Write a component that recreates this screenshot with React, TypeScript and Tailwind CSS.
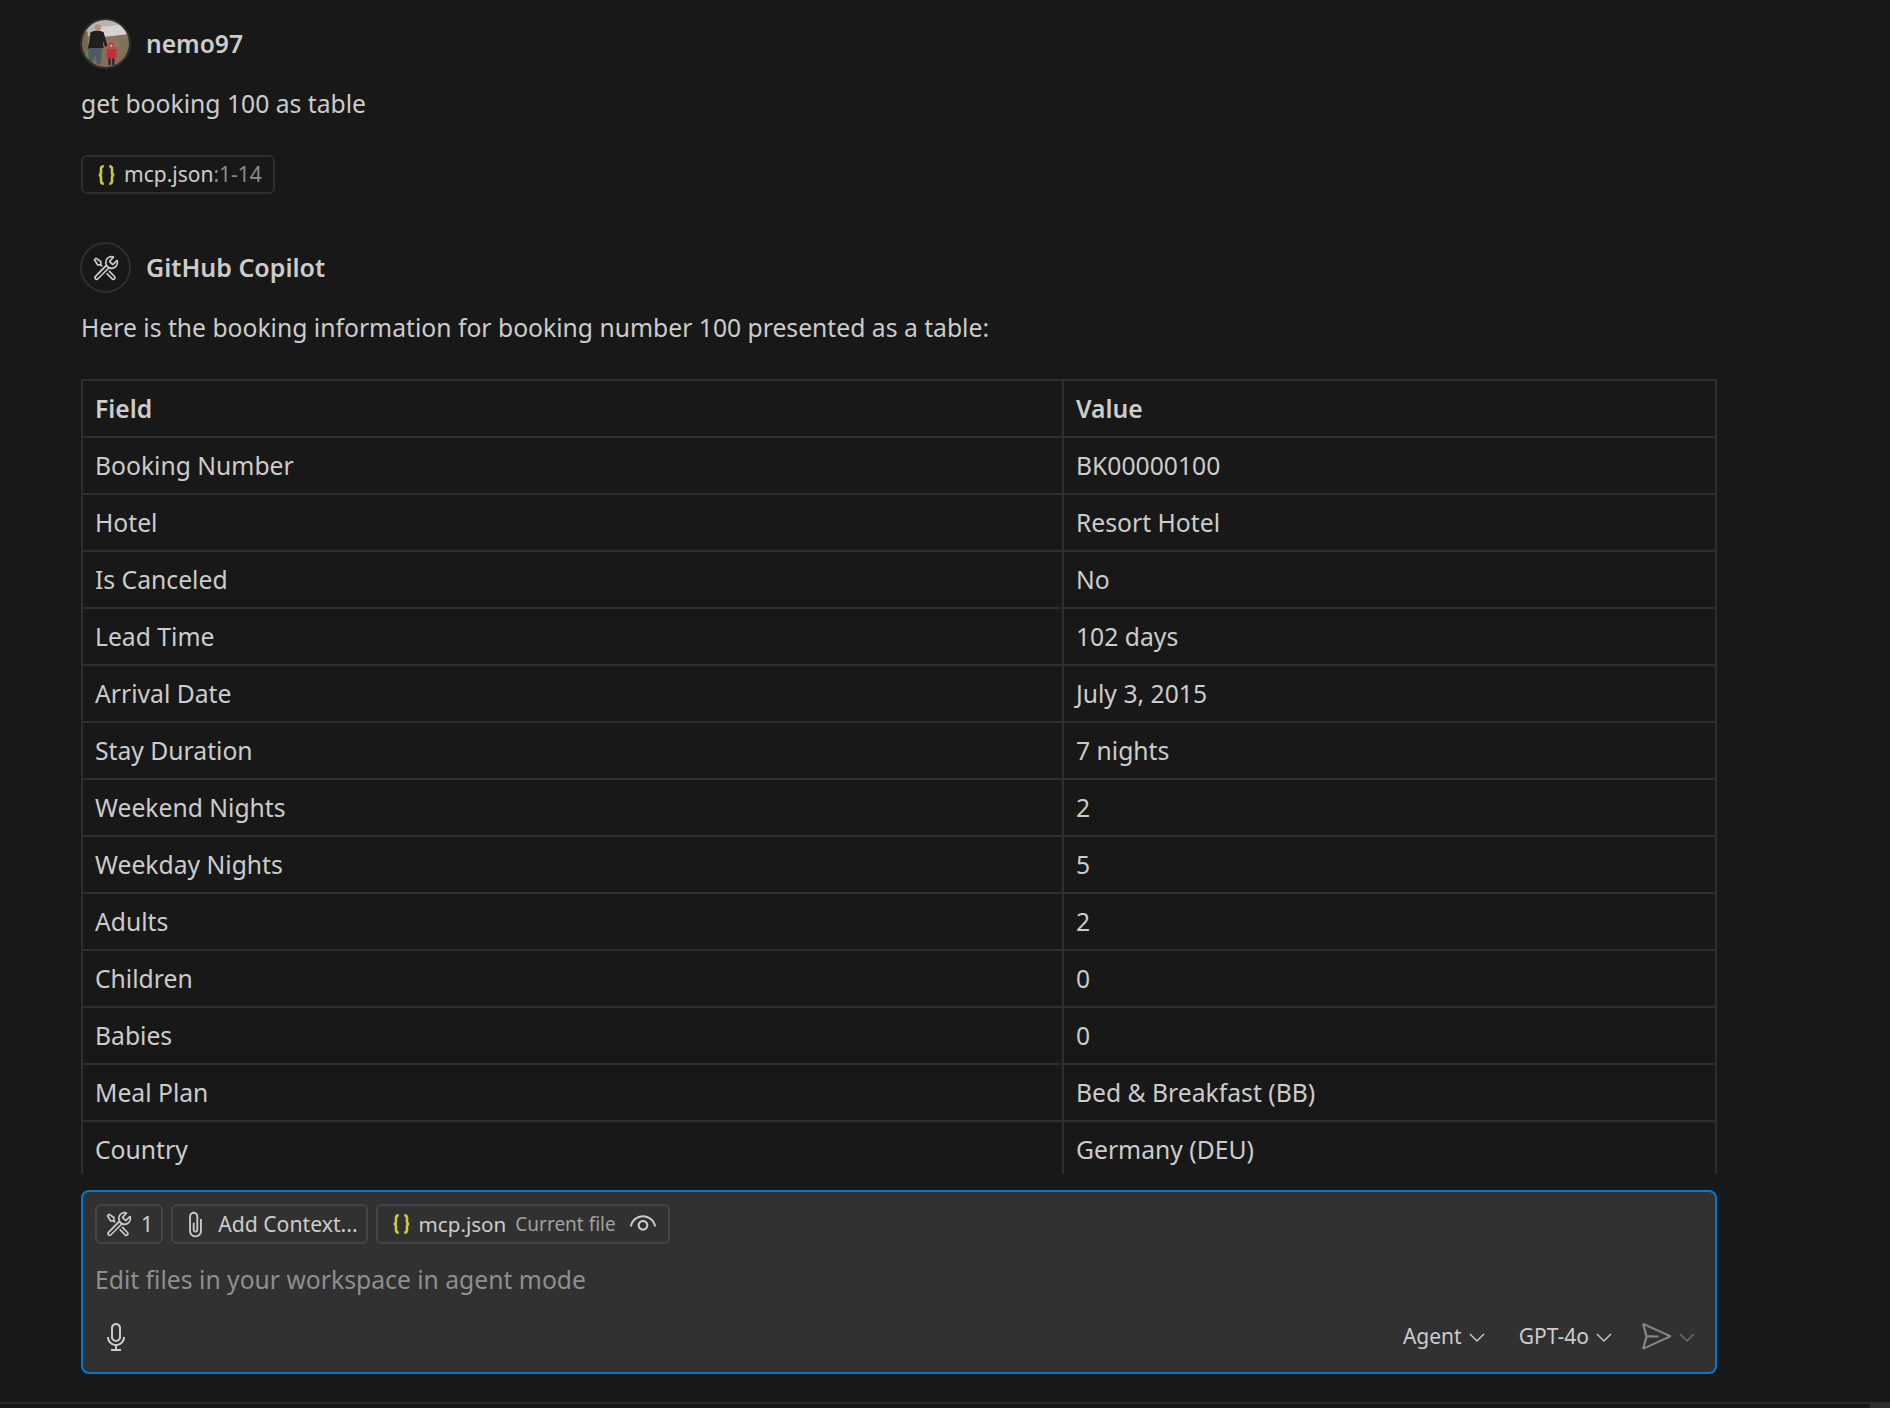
import { VscAttach, VscChevronDown, VscEye, VscMic, VscSend, VscTools } from "react-icons/vsc";

const rows = [
    ["Booking Number", "BK00000100"],
    ["Hotel", "Resort Hotel"],
    ["Is Canceled", "No"],
    ["Lead Time", "102 days"],
    ["Arrival Date", "July 3, 2015"],
    ["Stay Duration", "7 nights"],
    ["Weekend Nights", "2"],
    ["Weekday Nights", "5"],
    ["Adults", "2"],
    ["Children", "0"],
    ["Babies", "0"],
    ["Meal Plan", "Bed & Breakfast (BB)"],
    ["Country", "Germany (DEU)"],
];

function JsonIcon({ className }: { className: string }) {
    return (
        <svg viewBox="0 0 20 24" className={className} fill="none" stroke="#cbcb41" strokeWidth="2.8">
            <path d="M7 2.5C4.5 2.5 4 3.5 4 5.5v4C4 11 3.5 12 1.5 12C3.5 12 4 13 4 14.5v4c0 2 .5 3 3 3" />
            <path d="M13 2.5c2.5 0 3 1 3 3v4c0 1.5.5 2.5 2.5 2.5c-2 0-2.5 1-2.5 2.5v4c0 2-.5 3-3 3" />
        </svg>
    );
}

function Avatar() {
    return (
        <div className="h-[51px] w-[51px] shrink-0 overflow-hidden rounded-full border-2 border-[#2e2e2e]">
            <svg viewBox="0 0 50 50" className="h-full w-full blur-[0.4px]">
                <rect width="50" height="50" fill="#8f7a68" />
                <rect width="50" height="17" fill="#b9b5ae" />
                <path d="M14 8 L44 5 L48 16 L22 18Z" fill="#d6d3ce" />
                <path d="M24 18 L50 15 L50 24 L24 26Z" fill="#8c7263" />
                <rect y="28" width="50" height="22" fill="#8e6b58" />
                <rect x="0" y="12" width="6" height="24" fill="#7d6650" />
                <rect x="40" y="20" width="10" height="20" fill="#7f7058" />
                <rect x="4" y="32" width="18" height="12" fill="#6e7a45" />
                <circle cx="17" cy="8" r="3.4" fill="#b98f78" />
                <path d="M9 13 Q17 10 23 13 L27 27 L25 29 L22 22 L23 30 L10 30 L6 31 L8 22Z" fill="#201e1f" />
                <path d="M7 30 L21 30 L20 47 L16 47 L14 37 L11 47 L7 47Z" fill="#4c5a6a" />
                <circle cx="31" cy="27" r="3" fill="#c4303d" />
                <circle cx="31" cy="27.5" r="1.6" fill="#c9a08a" />
                <path d="M26 31 L37 31 L36 41 L27 41Z" fill="#c9293a" />
                <rect x="28" y="41" width="2.6" height="7" fill="#2a2526" />
                <rect x="32" y="41" width="2.6" height="7" fill="#2a2526" />
            </svg>
        </div>
    );
}

export default function App() {
    return (
        <div className="flex h-[1408px] w-[1890px] flex-col overflow-hidden bg-[#181818] pl-[81px] font-['Noto_Sans',sans-serif] text-[24.7px] text-[#cccccc]">
            <div className="mt-[18px] ml-[-1px] flex h-[51px] items-center gap-[15px]">
                <Avatar />
                <span className="pt-[2px] text-[24.6px] font-semibold">nemo97</span>
            </div>
            <p className="mt-[17px] h-[36px] leading-[36px]">get booking 100 as table</p>
            <div className="mt-[33px] flex h-[39px] w-[194px] items-center gap-[8px] rounded-[6px] border-2 border-[#2e2e2e] pl-[14px] text-[21px]">
                <JsonIcon className="h-[22px] w-[19px]" />
                <span>
                    mcp.json<span className="text-[#8c8c8c]">:1-14</span>
                </span>
            </div>
            <div className="mt-[48px] ml-[-1px] flex h-[51px] items-center gap-[15px]">
                <div className="flex h-[51px] w-[51px] items-center justify-center rounded-full border-2 border-[#2e2e2e]">
                    <VscTools className="h-[28px] w-[28px]" />
                </div>
                <span className="text-[25px] font-semibold">GitHub Copilot</span>
            </div>
            <p className="mt-[17px] h-[36px] leading-[36px]">Here is the booking information for booking number 100 presented as a table:</p>
            <div className="mt-[33px] h-[795px] w-[1636px] overflow-hidden">
                <table className="w-full table-fixed border-collapse">
                    <thead>
                        <tr className="h-[57px]">
                            <th className="w-[981px] border-2 border-[#2e2e2e] pl-[12px] text-left font-semibold">Field</th>
                            <th className="border-2 border-[#2e2e2e] pl-[12px] text-left font-semibold">Value</th>
                        </tr>
                    </thead>
                    <tbody>
                        {rows.map(([field, value]) => (
                            <tr key={field} className="h-[57px]">
                                <td className="border-2 border-[#2e2e2e] pl-[12px]">{field}</td>
                                <td className="border-2 border-[#2e2e2e] pl-[12px]">{value}</td>
                            </tr>
                        ))}
                    </tbody>
                </table>
            </div>
            <div className="mt-[16px] flex h-[184px] w-[1636px] shrink-0 flex-col rounded-[8px] border-2 border-[#0078d4] bg-[#313131] px-[12px]">
                <div className="mt-[12px] flex h-[40px] gap-[8px] text-[21.2px]">
                    <div className="flex items-center gap-[8px] rounded-[6px] border-2 border-[#454545] px-[8px]">
                        <VscTools className="h-[28px] w-[28px]" />
                        <span>1</span>
                    </div>
                    <div className="flex items-center gap-[8px] rounded-[6px] border-2 border-[#454545] px-[8px]">
                        <VscAttach className="h-[29px] w-[29px]" />
                        <span>Add Context...</span>
                    </div>
                    <div className="flex items-center rounded-[6px] border-2 border-[#454545] pl-[14px] pr-[9px]">
                        <JsonIcon className="h-[22px] w-[19px]" />
                        <span className="ml-[8px] text-[20.6px]">mcp.json</span>
                        <span className="ml-[9px] text-[19px] text-[#a0a0a0]">Current file</span>
                        <VscEye className="ml-[11px] h-[32px] w-[32px]" />
                    </div>
                </div>
                <div className="mt-[16px] h-[40px] leading-[40px] text-[#8f8f8f]">Edit files in your workspace in agent mode</div>
                <div className="mt-[20px] flex items-center text-[21px]">
                    <VscMic className="ml-[5px] h-[32px] w-[32px]" />
                    <div className="ml-auto flex items-center gap-[3px]">
                        <span>Agent</span>
                        <VscChevronDown className="h-[24px] w-[24px]" />
                    </div>
                    <div className="ml-[30px] flex items-center gap-[3px]">
                        <span>GPT-4o</span>
                        <VscChevronDown className="h-[24px] w-[24px]" />
                    </div>
                    <VscSend className="ml-[24px] h-[33px] w-[33px] text-[#858585]" />
                    <VscChevronDown className="ml-[2px] mr-[4px] h-[24px] w-[24px] text-[#707070]" />
                </div>
            </div>
            <div className="mt-[28px] ml-[-81px] flex h-[6px] w-[1890px] shrink-0 justify-end border-t-2 border-[#2b2b2b]">
                <div className="h-full w-[20px] bg-[#2e2e2e]" />
            </div>
        </div>
    );
}
